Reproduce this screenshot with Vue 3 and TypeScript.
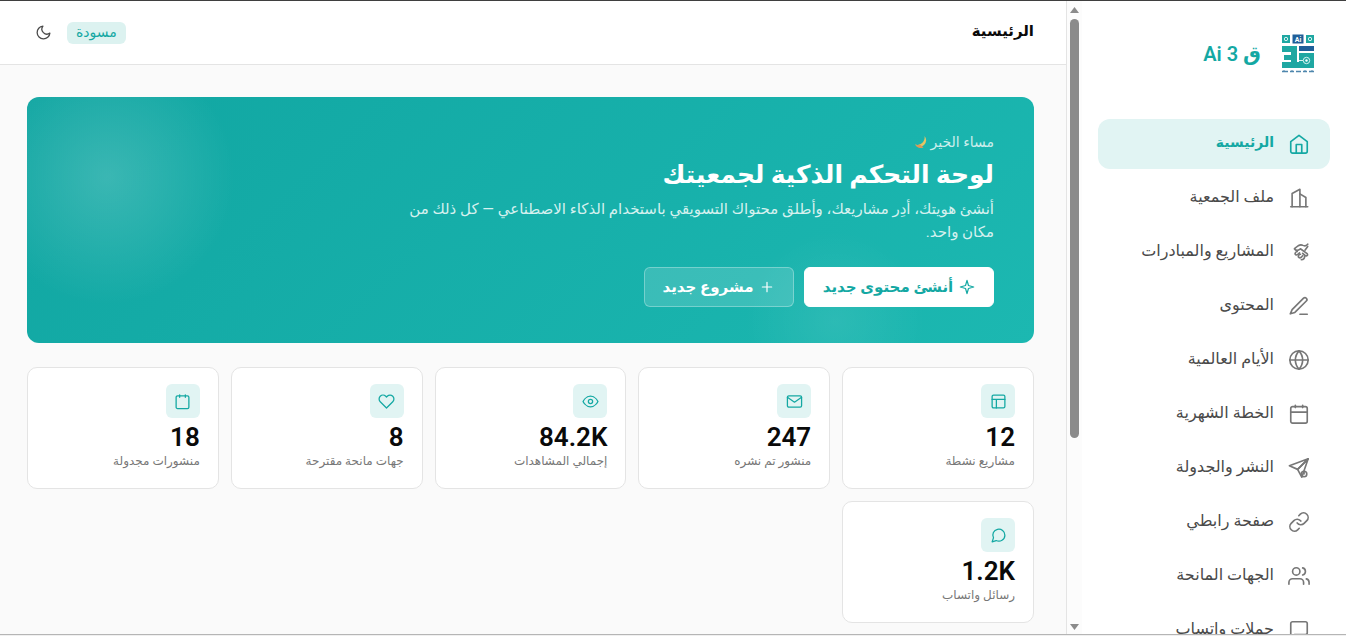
<script setup lang="ts">
interface NavItem {
  label: string
  paths: string[]
}

interface Stat {
  value: string
  label: string
  paths: string[]
}

const navItems: NavItem[] = [
  { label: 'الرئيسية', paths: ['M3 9.5L12 2.5l9 7V20a2 2 0 0 1-2 2H5a2 2 0 0 1-2-2z', 'M9 22V12.5h6V22'] },
  { label: 'ملف الجمعية', paths: ['M3 21.5h18.5', 'M4.5 21.5V7l8.500-4.500v19', 'M13 7.500l6.500 4v10'] },
  { label: 'المشاريع والمبادرات', paths: ['M21.500 3.500c-1.500 2-4 2-6 1-3-1.200-5 .8-8.500 4 1.500 2.500 4 2 6.500 0l7 5c2 1.800 0 3.500-1.800 2.300L16 13.500', 'M21.500 6l-3 4', 'M10 11.500c-2 .5-3 2.500-1.500 3.500s3-1 4-2', 'M13.500 14.500c-2 .5-3 2.500-1.500 3.500s3-.5 4-2', 'M18 16.500c.5 2-1 4-3.500 4'] },
  { label: 'المحتوى', paths: ['M17 3.500a2.120 2.120 0 0 1 3 3L7.500 19l-5 1.500L4.500 16z', 'M13 21h8'] },
  { label: 'الأيام العالمية', paths: ['M12 2a10 10 0 1 0 0 20a10 10 0 1 0 0-20z', 'M2 12h20', 'M12 2a15.300 15.300 0 0 1 4 10 15.300 15.300 0 0 1-4 10 15.300 15.300 0 0 1-4-10 15.300 15.300 0 0 1 4-10z'] },
  { label: 'الخطة الشهرية', paths: ['M5 4h14a2 2 0 0 1 2 2v14a2 2 0 0 1-2 2H5a2 2 0 0 1-2-2V6a2 2 0 0 1 2-2z', 'M8 2.500V5M16 2.500V5M3 10h18'] },
  { label: 'النشر والجدولة', paths: ['M22 2L1.500 9.500l9 4z', 'M22 2l-7 20-4.500-8.500z', 'M17.500 15.500a3 3 0 1 0 0 6a3 3 0 1 0 0-6z', 'M17.500 17v1.500'] },
  { label: 'صفحة رابطي', paths: ['M10 13a5 5 0 0 0 7.540.540l3-3a5 5 0 0 0-7.070-7.070l-1.720 1.710', 'M14 11a5 5 0 0 0-7.540-.540l-3 3a5 5 0 0 0 7.070 7.070l1.710-1.710'] },
  { label: 'الجهات المانحة', paths: ['M17 21v-2a4 4 0 0 0-4-4H5a4 4 0 0 0-4 4v2', 'M9 3a4 4 0 1 0 0 8a4 4 0 1 0 0-8z', 'M23 21v-2a4 4 0 0 0-3-3.870', 'M16 3.130a4 4 0 0 1 0 7.750'] },
  { label: 'حملات واتساب', paths: ['M21 15a2 2 0 0 1-2 2H7l-4 4V5a2 2 0 0 1 2-2h14a2 2 0 0 1 2 2z'] },
]

const stats: Stat[] = [
  { value: '12', label: 'مشاريع نشطة', paths: ['M5 3h14a2 2 0 0 1 2 2v14a2 2 0 0 1-2 2H5a2 2 0 0 1-2-2V5a2 2 0 0 1 2-2z', 'M3 9h18M9 9v12'] },
  { value: '247', label: 'منشور تم نشره', paths: ['M4 4h16a2 2 0 0 1 2 2v12a2 2 0 0 1-2 2H4a2 2 0 0 1-2-2V6a2 2 0 0 1 2-2z', 'M22 6l-10 7L2 6'] },
  { value: '84.2K', label: 'إجمالي المشاهدات', paths: ['M1.500 12S5 4.500 12 4.500 22.500 12 22.500 12 19 19.500 12 19.500 1.500 12 1.500 12z', 'M12 9a3 3 0 1 0 0 6a3 3 0 1 0 0-6z'] },
  { value: '8', label: 'جهات مانحة مقترحة', paths: ['M20.840 4.610a5.500 5.500 0 0 0-7.780 0L12 5.670l-1.060-1.060a5.500 5.500 0 0 0-7.780 7.780L12 21.230l8.840-8.840a5.500 5.500 0 0 0 0-7.780z'] },
  { value: '18', label: 'منشورات مجدولة', paths: ['M5 4h14a2 2 0 0 1 2 2v14a2 2 0 0 1-2 2H5a2 2 0 0 1-2-2V6a2 2 0 0 1 2-2z', 'M8 2.500V6M16 2.500V6'] },
  { value: '1.2K', label: 'رسائل واتساب', paths: ['M21 11.500a8.500 8.500 0 0 1-12.300 7.600L3 21l1.900-5.700A8.500 8.500 0 1 1 21 11.500z'] },
]
</script>

<template>
  <div class="app" dir="rtl">
    <aside class="sidebar">
      <div class="side-content">
        <div class="brand">
          <svg class="logo" viewBox="0 0 34 40" aria-hidden="true">
            <g fill="#1fa7a2">
              <rect x="1" y="1" width="8" height="8" />
              <rect x="25" y="1" width="8" height="8" />
              <path d="M1 12h15v16h17v6H1v-6h9v-2H3v-5h7v-3H1z" />
              <rect x="18" y="19" width="15" height="10" />
            </g>
            <rect x="11.500" y="0.500" width="11" height="9" fill="#1f5f99" />
            <rect x="18" y="12" width="15" height="5" fill="#1f5f99" />
            <g fill="none" stroke="#d8f3f1" stroke-width="1">
              <circle cx="5" cy="5" r="1.700" />
              <circle cx="29" cy="5" r="1.700" />
              <circle cx="25.500" cy="26.500" r="3.200" />
              <path d="M18 26.500h4" />
            </g>
            <circle cx="25.500" cy="26.500" r="1.200" fill="#fff" />
            <text x="17" y="7.500" class="logo-ai">Ai</text>
            <path d="M1 37.500h6M9 37.500h4M15 37.500h5M22 37.500h4M28 37.500h5" stroke="#4e86ad" stroke-width="1.300" />
            <path d="M3 36v1M11 36v1M24 36v1M31 36v1" stroke="#4e86ad" />
          </svg>
          <span class="brand-name">ق Ai 3</span>
        </div>
        <nav class="nav">
          <a v-for="(item, i) in navItems" :key="item.label" href="#" class="nav-item" :class="{ active: i === 0 }">
            <svg class="nav-icon" viewBox="0 0 24 24" aria-hidden="true"><path v-for="d in item.paths" :key="d" :d="d" /></svg>
            <span>{{ item.label }}</span>
          </a>
        </nav>
      </div>
      <div class="scrollbar" aria-hidden="true">
        <svg viewBox="0 0 9 6"><path d="M4.500 0L9 6H0z" /></svg>
        <div class="track"><div class="thumb"></div></div>
        <svg viewBox="0 0 9 6"><path d="M0 0h9L4.500 6z" /></svg>
      </div>
    </aside>

    <div class="main">
      <header class="topbar">
        <h1>الرئيسية</h1>
        <div class="tools">
          <span class="badge">مسودة</span>
          <button class="theme" type="button" aria-label="الوضع الداكن">
            <svg viewBox="0 0 24 24"><path d="M21 12.800A9 9 0 1 1 11.200 3a7 7 0 0 0 9.800 9.800z" /></svg>
          </button>
        </div>
      </header>

      <main class="content">
        <section class="hero">
          <p class="greeting">
            <span>مساء الخير</span>
            <svg viewBox="0 0 14 14" aria-hidden="true"><path d="M10.500 1A6.300 6.300 0 1 1 1 9.600 7.500 7.500 0 0 0 10.500 1z" fill="#e5c465" /><path d="M1 9.600a7 7 0 0 0 5 0l3.500 2.800A6.300 6.300 0 0 1 1 9.600z" fill="#d99a5b" /></svg>
          </p>
          <h2>لوحة التحكم الذكية لجمعيتك</h2>
          <p class="desc">أنشئ هويتك، أدِر مشاريعك، وأطلق محتواك التسويقي باستخدام الذكاء الاصطناعي — كل ذلك من مكان واحد.</p>
          <div class="actions">
            <button type="button" class="btn primary">
              <svg viewBox="0 0 24 24" aria-hidden="true"><path d="M12 2l2.200 7.800L22 12l-7.800 2.200L12 22l-2.200-7.800L2 12l7.800-2.200z" /></svg>
              <span>أنشئ محتوى جديد</span>
            </button>
            <button type="button" class="btn ghost">
              <svg viewBox="0 0 24 24" aria-hidden="true"><path d="M12 5v14M5 12h14" /></svg>
              <span>مشروع جديد</span>
            </button>
          </div>
        </section>

        <section class="stats">
          <article v-for="s in stats" :key="s.label" class="card">
            <div class="card-icon"><svg viewBox="0 0 24 24" aria-hidden="true"><path v-for="d in s.paths" :key="d" :d="d" /></svg></div>
            <strong dir="ltr">{{ s.value }}</strong>
            <span class="card-label">{{ s.label }}</span>
          </article>
        </section>
      </main>
    </div>
  </div>
</template>

<style>
body {
  margin: 0;
  overflow: hidden;
}
</style>

<style scoped>
* {
  box-sizing: border-box;
}
.app {
  display: flex;
  height: 100vh;
  overflow: hidden;
  border-top: 1px solid #3f3f3f;
  background: #fafafa;
  color: #0a0a0a;
  font-family: Roboto, "DejaVu Sans", sans-serif;
  box-shadow: inset 0 -1px 0 #f0f0f0, inset 0 -2px 0 #b5b5b5;
}
h1, h2, p {
  margin: 0;
}
svg {
  display: block;
  flex: none;
}
button {
  font-family: inherit;
  cursor: pointer;
}
.sidebar {
  display: flex;
  flex: none;
  width: 280px;
  margin-bottom: 2px;
  overflow: hidden;
  border-left: 1px solid #e4e4e4;
  background: #fff;
}
.side-content {
  flex: 1;
  min-width: 0;
  padding: 0 16px;
}
.brand {
  display: flex;
  align-items: center;
  gap: 20px;
  height: 118px;
  padding: 0 15px 12px 0;
}
.logo {
  width: 34px;
  height: 40px;
}
.logo-ai {
  fill: #fff;
  font-size: 7px;
  font-weight: 700;
  text-anchor: middle;
  direction: ltr;
}
.brand-name {
  color: #14a8a3;
  font-size: 20px;
  font-weight: 600;
}
.nav {
  display: flex;
  flex-direction: column;
  gap: 4px;
}
.nav-item {
  display: flex;
  align-items: center;
  gap: 14px;
  height: 50px;
  padding: 0 20px;
  border-radius: 12px;
  color: #4a4a4a;
  font-size: 16px;
  text-decoration: none;
  white-space: nowrap;
}
.nav-item span {
  padding-bottom: 4px;
}
.nav-icon {
  width: 22px;
  height: 22px;
  color: #777;
}
.nav-icon,
.theme svg,
.btn svg,
.card-icon svg {
  fill: none;
  stroke: currentColor;
  stroke-width: 1.800;
  stroke-linecap: round;
  stroke-linejoin: round;
}
.nav-item.active {
  background: #e1f4f3;
  color: #14a8a3;
  font-size: 14px;
  font-weight: 700;
}
.active .nav-icon {
  color: #14a8a3;
}
.scrollbar {
  display: flex;
  flex-direction: column;
  align-items: center;
  gap: 6px;
  width: 15px;
  padding: 6px 0 4px;
  background: #fcfcfc;
}
.scrollbar svg {
  width: 9px;
  height: 6px;
  fill: #8b8b8b;
}
.track {
  flex: 1;
  width: 9px;
}
.thumb {
  height: 70%;
  border-radius: 5px;
  background: #8b8b8b;
}
.main {
  flex: 1;
  min-width: 0;
}
.topbar {
  display: flex;
  align-items: center;
  justify-content: space-between;
  height: 64px;
  padding: 0 32px;
  border-bottom: 1px solid #e4e4e4;
  background: #fff;
}
.topbar h1 {
  padding-bottom: 3px;
  font-size: 15px;
  font-weight: 700;
}
.tools {
  display: flex;
  align-items: center;
  gap: 13px;
}
.badge {
  height: 22px;
  padding: 0 9px;
  border-radius: 6px;
  background: #dcf2f0;
  color: #14a8a3;
  font-size: 14px;
  line-height: 20px;
}
.theme {
  display: grid;
  place-items: center;
  width: 22px;
  height: 22px;
  padding: 0;
  border: 0;
  background: none;
  color: #4a4a4a;
}
.theme svg {
  width: 17px;
  height: 17px;
}
.content {
  padding: 32px 32px 0 27px;
}
.hero {
  min-height: 246px;
  padding: 35px 40px 36px;
  border-radius: 12px;
  background:
    radial-gradient(circle at 80px 80px, rgba(255, 255, 255, 0.170), transparent 128px),
    radial-gradient(circle at calc(100% - 199px) 224px, rgba(255, 255, 255, 0.080), transparent 90px),
    linear-gradient(315deg, #1cb8b1, #11a6a2);
  color: #fff;
}
.greeting {
  display: flex;
  align-items: center;
  gap: 3px;
  height: 20px;
  color: #cdeeec;
  font-size: 14px;
}
.greeting svg {
  width: 14px;
  height: 14px;
}
.hero h2 {
  height: 46px;
  font-size: 25px;
  font-weight: 700;
  line-height: 46px;
  white-space: nowrap;
}
.desc {
  max-width: 600px;
  color: #d6f1ef;
  font-size: 15px;
  line-height: 23px;
}
.actions {
  display: flex;
  gap: 10px;
  margin-top: 23px;
}
.btn {
  display: flex;
  align-items: center;
  justify-content: center;
  gap: 6px;
  height: 40px;
  padding: 0 17px;
  border: 1px solid #fff;
  border-radius: 6px;
  font-size: 15px;
  font-weight: 700;
  white-space: nowrap;
}
.btn svg {
  width: 16px;
  height: 16px;
}
.primary {
  min-width: 190px;
  background: #fff;
  color: #14a8a3;
}
.ghost {
  min-width: 150px;
  border-color: rgba(255, 255, 255, 0.300);
  background: rgba(255, 255, 255, 0.150);
  color: #fff;
}
.stats {
  display: grid;
  grid-template-columns: repeat(5, minmax(0, 1fr));
  gap: 12px;
  margin-top: 24px;
}
.card {
  display: flex;
  flex-direction: column;
  align-items: flex-start;
  height: 122px;
  padding: 16px 18px;
  border: 1px solid #e4e4e4;
  border-radius: 10px;
  background: #fff;
}
.card-icon {
  display: grid;
  place-items: center;
  width: 34px;
  height: 34px;
  border-radius: 6px;
  background: #e1f4f3;
  color: #14a8a3;
}
.card-icon svg {
  width: 17px;
  height: 17px;
}
.card strong {
  font-size: 26px;
  font-weight: 600;
  line-height: 38px;
}
.card-label {
  color: #777;
  font-size: 12px;
  line-height: 10px;
  white-space: nowrap;
}
</style>
